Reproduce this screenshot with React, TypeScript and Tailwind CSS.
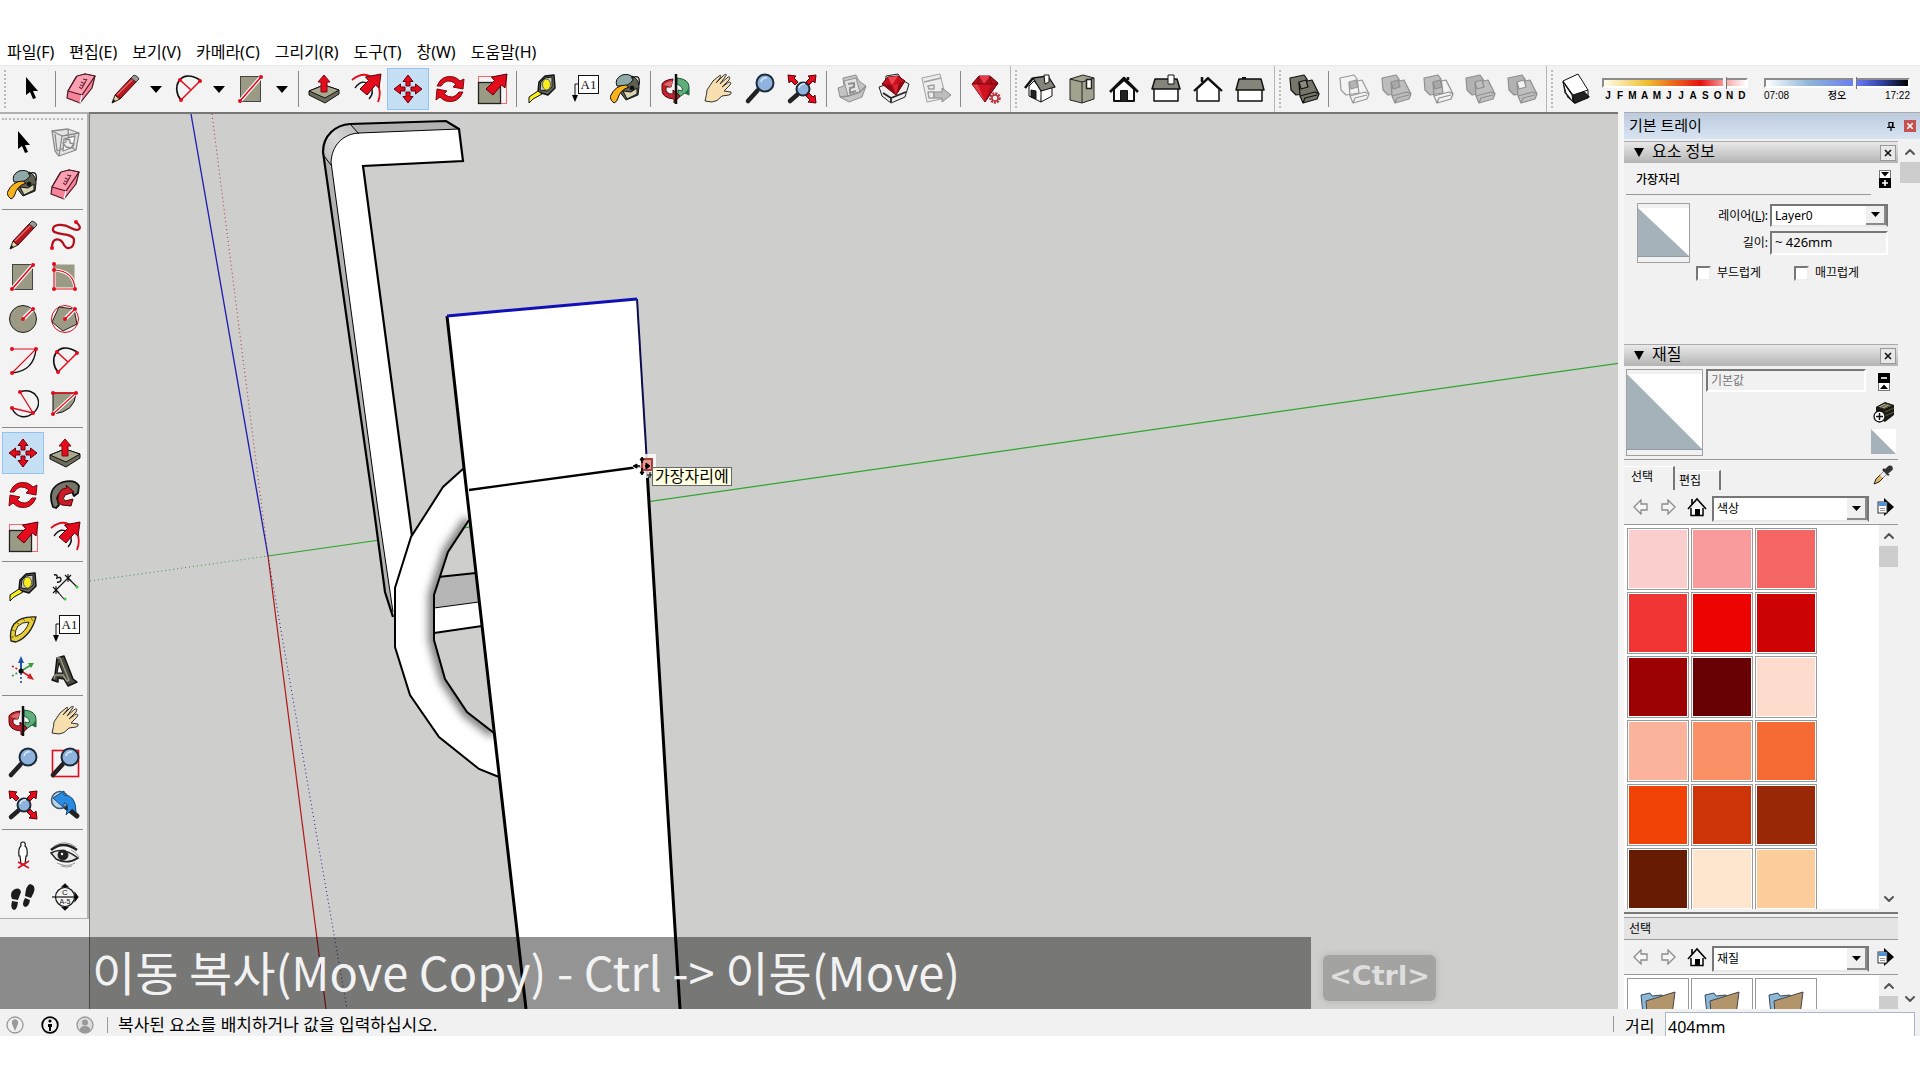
import React, { useState } from 'react';
import { ChevronDown, ChevronUp } from 'lucide-react';

const RED = '#e30b1c';
const TAN = '#9b9a84';

function Dots({ points }: { points: number[][] }) {
  return (
    <>
      {points.map(([x, y]) => (
        <circle key={`${x}-${y}`} cx={x} cy={y} r="2" fill={RED} />
      ))}
    </>
  );
}

function RedArrow() {
  return <path d="M31 1 L29 15 L25.500 12 L17 22 L10 16 L18.500 7.500 L15.500 4 Z" fill={RED} stroke="#5a0008" strokeWidth="1" />;
}

function Lens({ cx = 21, cy = 10, r = 8.5 }: { cx?: number; cy?: number; r?: number }) {
  return (
    <>
      <path d={`M${cx - r + 1} ${cy + r - 1} L4 28`} stroke="#222" strokeWidth="4.500" strokeLinecap="round" />
      <circle cx={cx} cy={cy} r={r} fill="#8fb3dc" stroke="#1d2a38" strokeWidth="2" />
      <path d={`M${cx - 4} ${cy - 1} A5 5 0 0 1 ${cx + 2} ${cy - 5}`} stroke="#d6e8fa" strokeWidth="1.500" fill="none" />
    </>
  );
}

function Boxes({ a, b, mid, line }: { a: string; b: string; mid: string; line: string }) {
  return (
    <g stroke={line} strokeWidth="1.200" strokeLinejoin="round">
      <path d="M2 5 L16 2 L19 6 L21 20 L8 22 L3 17 Z" fill={a} />
      <path d="M11 10 L24 7 L31 21 L29 26 L15 30 L12 23 Z" fill={b} />
      <path d="M12 23 L27 19 L31 21 M15 30 L17 25 L29 22" fill="none" />
      <path d="M11 9 L18 7 L20 14 L13 16 Z" fill={mid} />
    </g>
  );
}

const icons: Record<string, React.ReactNode> = {
  select: <path d="M11 4 V22 L15 19 L18 26 L21 25 L18 18 H23 Z" fill="#000" />,
  component: (
    <g fill="none" stroke="#8a8a8a" strokeWidth="1.300" strokeLinejoin="round">
      <path d="M3 4 L19 2 L30 6 L27 23 L10 29 L6 24 Z" fill="#e4e4e4" />
      <path d="M3 4 L13 9 L30 6 M13 9 L10 29 M6 7 L8 24 M8 24 L20 19 L27 23 M20 19 L19 2" />
      <path d="M15 12 L26 9 L24 20 L14 24 Z" fill="#fff" />
      <path d="M14 16 L17 15 V12 L21 13 V16 L25 17 L22 21 L17 20 Z" fill="#ececec" />
    </g>
  ),
  paint: (
    <g stroke="#111" strokeWidth="1" strokeLinejoin="round">
      <path d="M11 8 L22 3 Q29 6 29 14 L28 22 L16 27 L9 18 Z" fill="#5f5f52" />
      <path d="M13 18 L21 19 L27 15 L27 21 L17 26 Z" fill="#d9d4b4" />
      <path d="M7 13 Q4 6 12 2 Q20 0 23 5 Q23 10 15 13 Z" fill="#8fa9a8" />
      <path d="M21 5 Q31 0 29 12" fill="none" strokeWidth="1.300" />
      <circle cx="22" cy="15" r="2" fill="#111" />
      <path d="M0 24 Q5 12 16 12 L19 14 Q10 17 8 25 Q7 29 4 30 Q1 28 0 24 Z" fill="#fbb31c" />
    </g>
  ),
  eraser: (
    <g stroke="#4a1620" strokeWidth="1.200" strokeLinejoin="round">
      <path d="M3 18 L11 4 L20 1 L30 3 L27 15 L15 30 L2 25 Z" fill="#f7829a" />
      <path d="M3 18 L12 3 L20 1 L30 3 L17 22 Z" fill="#fb9fb2" />
      <path d="M17 22 L15 30" stroke="#fff" />
      <path d="M14 14 L17 16 M15 12 L19 13 M16 9 L20 11 M18 6 L22 7 M17 15 L22 6" stroke="#6b2736" />
    </g>
  ),
  pencil: (
    <g strokeLinejoin="round">
      <path d="M3 30 L6 22 L11 26 Z" fill="#e8cfa0" stroke="#222" />
      <path d="M3 30 L4.500 26 L6.500 28 Z" fill="#111" />
      <path d="M6 22 L23 4 L28 8 L11 26 Z" fill="#b9161f" stroke="#3a0508" />
      <path d="M8 22 L24 6" stroke="#ea6a6a" strokeWidth="1.200" />
      <path d="M22 5 L25 2 Q29 3 30 6 L27 9 Z" fill="#999" stroke="#333" />
    </g>
  ),
  freehand: (
    <g>
      <path d="M27 3 C35 10 29 13 22 9 C14 4 3 5 4 11 C5 17 25 13 25 21 C25 30 18 31 15 26 C12 19 3 17 3 29" fill="none" stroke="#b3101c" strokeWidth="2.200" />
      <Dots points={[[27, 3], [3, 29]]} />
    </g>
  ),
  rect: (
    <g>
      <rect x="5.500" y="3.500" width="20" height="25" fill={TAN} stroke="#444" />
      <path d="M26 4 L5 28" stroke="#fff" strokeWidth="4" />
      <path d="M26 4 L5 28" stroke={RED} strokeWidth="1.600" />
      <Dots points={[[26, 4], [5, 28]]} />
    </g>
  ),
  rotatedRect: (
    <g>
      <rect x="5.500" y="3.500" width="20" height="25" fill={TAN} />
      <path d="M5 9 Q25 10 26 28 H5 Z" fill={TAN} stroke="#fff" strokeWidth="3" />
      <path d="M5 3 V28 H26 Q25 10 5 9" fill="none" stroke={RED} strokeWidth="1.200" />
      <Dots points={[[5, 3], [5, 9], [5, 28], [26, 28]]} />
    </g>
  ),
  circle: (
    <g>
      <circle cx="16" cy="16" r="13.500" fill={TAN} stroke="#222" />
      <path d="M16 16 L26 6" stroke="#fff" strokeWidth="4" />
      <path d="M16 16 L26 6" stroke={RED} strokeWidth="1.500" />
      <Dots points={[[16, 16], [26, 6]]} />
    </g>
  ),
  polygon: (
    <g>
      <circle cx="16" cy="16" r="13.500" fill="none" stroke={RED} />
      <path d="M25 6 L28 21 L14 28 L3 19 L10 4 Z" fill={TAN} stroke="#222" />
      <path d="M16 16 L26 6" stroke="#fff" strokeWidth="4" />
      <path d="M16 16 L26 6" stroke={RED} strokeWidth="1.500" />
      <Dots points={[[16, 16], [26, 6]]} />
    </g>
  ),
  arc: (
    <g fill="none">
      <path d="M29 4 Q27 26 5 28" stroke="#111" strokeWidth="1.400" />
      <path d="M5 4 H29 L5 28" stroke={RED} strokeWidth="1.100" />
      <Dots points={[[5, 4], [29, 4], [5, 28]]} />
    </g>
  ),
  arc2: (
    <g fill="none">
      <path d="M9 27 C-1 16 7 -6 28 7" stroke="#111" strokeWidth="1.600" />
      <path d="M9 27 L28 8 M8 7 L19 17" stroke={RED} strokeWidth="1.500" />
      <Dots points={[[8, 7], [28, 8], [9, 27]]} />
    </g>
  ),
  arc3: (
    <g fill="none">
      <path d="M13 5 C29 -1 38 17 26 26 C19 32 9 31 5 21" stroke="#111" strokeWidth="1.400" />
      <path d="M13 5 L26 26 L5 21" stroke={RED} strokeWidth="1.300" />
      <Dots points={[[13, 5], [5, 21], [26, 26]]} />
    </g>
  ),
  pie: (
    <g fill="none">
      <path d="M4 6 H27 Q26 25 4 27 Z" fill={TAN} stroke="#111" />
      <path d="M4 27 L27 6" stroke="#fff" strokeWidth="3.500" />
      <path d="M4 27 L27 6 H4" stroke={RED} strokeWidth="1.300" />
      <Dots points={[[4, 6], [27, 6], [4, 27]]} />
    </g>
  ),
  move: (
    <g fill={RED} stroke="#6b0008" strokeWidth="1">
      {[0, 90, 180, 270].map((angle) => (
        <path key={angle} d="M16 2 L21 8.500 H18 V13 H14 V8.500 H11 Z" transform={`rotate(${angle} 16 16)`} />
      ))}
    </g>
  ),
  pushPull: (
    <g stroke="#111" strokeLinejoin="round">
      <path d="M1 18 L16 12 L31 17 V21 L17 30 L1 22 Z" fill="#6d6c5a" />
      <path d="M1 18 L16 12 L31 17 L17 25 Z" fill="#a9a891" />
      <path d="M16 2 L22 9 H19 V19 H13 V9 H10 Z" fill={RED} stroke="#7a0a10" />
    </g>
  ),
  rotate: (
    <g fill={RED} stroke="#7a0a10" strokeWidth="1">
      <path d="M3 13 Q8 1 20 4 Q23 5 26 8 L30 6 L29 16 L19 14 L22 11 Q13 4 7 13 Z" />
      <path d="M29 19 Q24 31 12 28 Q9 27 6 24 L2 27 L3 16 L13 18 L10 21 Q19 28 25 19 Z" />
    </g>
  ),
  followMe: (
    <g strokeLinejoin="round">
      <path d="M4 28 Q-3 9 14 3 Q26 0 30 7 L29 14 L25 17 L22 11 Q12 9 8 19 L10 26 L7 29 Z" fill="#77766a" stroke="#111" strokeWidth="1.800" />
      <path d="M9 19 Q10 9 18 9 L17 6 L25 13 L16 16 Q13 20 16 22 L24 20 L22 27 L13 26 Q8 24 9 19 Z" fill="#c91c27" stroke="#4a0508" />
    </g>
  ),
  scale: (
    <g>
      <rect x="2.500" y="3.500" width="28" height="27" fill="none" stroke="#f06a72" />
      <rect x="2.500" y="9.500" width="22" height="21" fill={TAN} stroke="#222" strokeWidth="1.300" />
      <RedArrow />
    </g>
  ),
  offset: (
    <g fill="none">
      <path d="M2 7 Q14 -3 24 6 Q33 16 28 29" stroke={RED} strokeWidth="1.800" />
      <path d="M5 15 Q12 5 20 12 Q25 20 19 26" stroke="#111" strokeWidth="1.400" />
      <RedArrow />
    </g>
  ),
  tape: (
    <g stroke="#111" strokeLinejoin="round">
      <path d="M13 9 L19 3 L28 2 L29 15 L22 22 L12 19 Z" fill="#66655c" strokeWidth="1.500" />
      <path d="M15 9 L19 5 L26 4 L26 14 L21 18 L14 17 Z" fill="#c9c9bd" />
      <ellipse cx="20.500" cy="11.500" rx="4" ry="5.500" fill="#f8ef1c" stroke="#555" />
      <path d="M12 18 L16 21 L7 26 L3 30 V24 Z" fill="#f8ef1c" />
    </g>
  ),
  dimension: (
    <g fill="none" stroke="#111" strokeWidth="1.100">
      <path d="M7 19 L19 7 M4 16 L10 22 M10 16 L4 22 M7 15 V23 M16 4 L22 10 M22 4 L16 10 M19 3 V11" />
      <path d="M7 19 L15 28 M19 7 L28 16" />
      <path d="M5 4 Q9 3 8 7 Q12 5 12 9 Q11 12 8 11" strokeWidth="1.400" />
      <circle cx="16" cy="28" r="1.500" fill="#3c3" stroke="none" />
      <circle cx="28" cy="16" r="1.500" fill="#3c3" stroke="none" />
    </g>
  ),
  protractor: (
    <g stroke="#222" strokeLinejoin="round">
      <path d="M29 4 Q14 3 7 11 Q2 18 4 28 L9 29 Q24 23 29 4 Z" fill="#e9cf35" strokeWidth="1.300" />
      <path d="M22 9 Q15 9 11 13 Q8 17 8 23 L10 23 Q19 19 22 9 Z" fill="#f4f3e8" />
      <path d="M24 5 L26 8 M16 6 L18 8 M10 10 L12 11 M5 17 L8 18 M4 24 L7 24" stroke="#776510" />
    </g>
  ),
  text: (
    <g>
      <rect x="10.500" y="2.500" width="20" height="18" fill="#fff" stroke="#111" />
      <text x="20.500" y="16" textAnchor="middle" fontSize="13" fontFamily="Liberation Serif, serif" fill="#111">A1</text>
      <path d="M10 11 H7 V25" fill="none" stroke="#111" />
      <path d="M4 22 H10 L7 29 Z" fill="#000" />
    </g>
  ),
  axes: (
    <g fill="none" strokeWidth="1.600">
      <path d="M14 16 V6" stroke="#1d55a8" strokeWidth="2" />
      <path d="M11 8 L14 1 L17 8 Z" fill="#1d55a8" />
      <path d="M14 16 L24 10" stroke="#3c9c3c" />
      <path d="M21 8 L27 8 L24 13 Z" fill="#3c9c3c" />
      <path d="M14 16 L22 21" stroke="#d21c24" />
      <path d="M20 23 L27 25 L23 18 Z" fill="#d21c24" />
      <path d="M14 18 V28" stroke="#1d55a8" strokeDasharray="2 2" />
      <path d="M5 21 L12 17" stroke="#3c9c3c" strokeDasharray="2 2" />
      <path d="M5 11 L12 15" stroke="#d21c24" strokeDasharray="2 2" />
      <circle cx="14" cy="16" r="2.500" fill="#111" />
    </g>
  ),
  text3d: (
    <g strokeLinejoin="round" stroke="#111">
      <path d="M8 3 L15 1 L24 24 L28 27 L19 31 L15 24 L9 23 L9 27 L3 25 L6 20 Z" fill="#4b4a42" strokeWidth="1.500" />
      <path d="M10 8 L14 18 L8 18 Z" fill="#f3f3f3" />
      <path d="M8 3 L11 3 L20 25 L18 26 L14 20 L6 20 L5 24" fill="none" stroke="#9b9a84" strokeWidth="1.400" />
    </g>
  ),
  orbit: (
    <g strokeLinejoin="round">
      <path d="M17 5 Q29 6 29 14 V22 L25 20 L18 25 V17 L22 18 Q24 14 17 11 Z" fill="#5fae7c" stroke="#1c5a34" />
      <path d="M25 20 L29 15 V22 Z" fill="#22703f" />
      <path d="M13 6 L11 14 L6 14 V18 Q9 22 13 21 V17 L20 23 L14 30 V26 Q2 25 2 17 V11 Q4 7 13 6 Z" fill="#c4222f" stroke="#55060d" />
      <path d="M4 12 Q7 8 13 8 L11 14 Z" fill="#d8686a" />
      <path d="M16 1 V31" stroke="#111" strokeWidth="2.500" />
    </g>
  ),
  pan: (
    <path
      d="M3 28 Q5 20 5 17 L11 8 L17 3 Q20 1 18 5 L14 10 L22 2 Q26 0 23 4 L18 11 L26 4 Q29 3 27 7 L20 14 L27 9 Q30 9 28 12 L22 18 L29 19 Q30 21 27 22 L20 23 Q15 29 10 29 Z"
      fill="#f7dfb0"
      stroke="#333"
      strokeLinejoin="round"
    />
  ),
  zoom: <Lens />,
  zoomWindow: (
    <g>
      <rect x="3.500" y="3.500" width="26" height="26" fill="none" stroke={RED} strokeWidth="1.600" />
      <Lens />
    </g>
  ),
  zoomExtents: (
    <g>
      <Lens cx={17} cy={16} r={6.5} />
      <g fill={RED} stroke="#5a0008" strokeWidth="1">
        <path d="M2 2 L10 3 L8 5 L12 9 L9 12 L5 8 L3 10 Z" />
        <path d="M30 2 L22 3 L24 5 L20 9 L23 12 L27 8 L29 10 Z" />
        <path d="M30 30 L22 29 L24 27 L20 23 L23 20 L27 24 L29 22 Z" />
      </g>
    </g>
  ),
  previous: (
    <g>
      <path d="M17 18 L28 27" stroke="#222" strokeWidth="5" strokeLinecap="round" />
      <circle cx="11" cy="11" r="8.500" fill="#b9d2ea" stroke="#456" strokeWidth="1.500" />
      <path d="M4 9 L15 2 V6 Q27 6 27 23 L23 20 L17 26 Q21 14 15 14 V19 Z" fill="#2b8be0" stroke="#134a80" />
    </g>
  ),
  camera: (
    <g fill="none" stroke="#111" strokeWidth="1.200">
      <path d="M16 3 Q19 3 18 7 Q21 9 20 17 L19 17 L18 25 H14 L13 17 L12 17 Q11 9 14 7 Q13 3 16 3 Z" fill="#fff" />
      <path d="M11 29 L22 22 M11 23 L22 29" stroke={RED} strokeWidth="1.500" />
    </g>
  ),
  eye: (
    <g fill="none" stroke="#222">
      <path d="M2 14 Q14 7 29 19 Q18 26 7 20 Z" fill="#e8e8e8" strokeWidth="1.500" />
      <circle cx="14" cy="16" r="5" fill="#222" />
      <circle cx="13" cy="15" r="1.200" fill="#fff" stroke="none" />
      <path d="M2 11 Q14 1 28 11" strokeWidth="2.500" />
      <path d="M5 7 Q16 0 27 8 M8 24 Q18 29 26 24 M12 27 Q18 29 23 27 M22 11 Q27 13 30 18" stroke="#999" />
    </g>
  ),
  walk: (
    <g fill="#1c1c1c">
      <path d="M8 8 Q13 6 14 11 L11 19 L5 18 Q2 11 8 8 Z M5 20 L11 21 Q10 29 7 29 Q3 28 5 20 Z" />
      <path d="M23 3 Q29 4 27 11 L24 17 L18 15 Q19 4 23 3 Z M18 17 L23 19 Q22 26 18 26 Q14 24 18 17 Z" />
    </g>
  ),
  section: (
    <g fill="none" stroke="#111" strokeWidth="1.200">
      <circle cx="16" cy="16" r="9.500" />
      <path d="M3 16 H29" />
      <path d="M13 6 L16 3 L19 6 Z M26 12 L29 16 L26 20 Z M13 26 L16 29 L19 26 Z" fill="#000" />
      <text x="16" y="14" textAnchor="middle" fontSize="8" fontFamily="Liberation Sans, sans-serif" fill="#111" stroke="none">C</text>
      <text x="16" y="23" textAnchor="middle" fontSize="7" fontFamily="Liberation Sans, sans-serif" fill="#111" stroke="none">A-5</text>
    </g>
  ),
  getModels: (
    <g fill="#c4c4c4" stroke="#8f8f8f" strokeLinejoin="round">
      <path d="M2 15 L8 13 L7 5 L20 2 L23 8 L30 13 L26 24 L13 29 L4 24 Z" />
      <path d="M8 8 L20 5 L24 19 L12 23 Z" fill="#e2e2e2" />
      <path d="M12 11 L18 10 V14 L14 15 V20 L20 18" fill="none" strokeWidth="2" />
      <path d="M4 24 L12 23 L24 19 L30 13" fill="none" strokeWidth="1.500" />
    </g>
  ),
  shareModel: (
    <g stroke="#222" strokeLinejoin="round">
      <path d="M1 14 L7 12 L8 3 L20 1 L24 7 L31 11 L27 24 L13 30 L4 23 Z" fill="#eee" />
      <path d="M4 11 L10 4 L20 3 L27 8 L18 22 Z" fill="#c90f1e" stroke="#500" />
      <path d="M4 11 L14 12 L27 8 L18 22 Z" fill="#8e0814" stroke="none" />
      <path d="M10 4 L14 12 L20 3 Z" fill="#ee4450" stroke="none" />
      <path d="M14 12 L18 22 L21 10 Z" fill="#d8202e" stroke="none" />
      <path d="M5 20 L13 25 L28 19 M13 25 V29" fill="none" strokeWidth="1.800" />
    </g>
  ),
  shareComponent: (
    <g fill="#ededed" stroke="#a0a0a0" strokeLinejoin="round">
      <path d="M2 5 L20 1 L26 25 L7 29 Z" />
      <path d="M4 9 L21 5 M8 13 L14 12 V16 H9 Z M8 19 H14 V25 H9 Z" fill="none" strokeWidth="1.500" />
      <path d="M14 19 H22 V15 L31 22 L22 29 V25 H14 Z" fill="#bdbdbd" stroke="#8c8c8c" />
    </g>
  ),
  ruby: (
    <g strokeLinejoin="round">
      <path d="M2 11 L9 3 H20 L28 10 L15 29 Z" fill="#b00d1b" stroke="#5a0008" />
      <path d="M9 3 L14 11 L20 3 Z M2 11 H8 L15 29 Z" fill="#e63a48" />
      <path d="M8 11 H21 L15 29 Z" fill="#d01424" />
      <path d="M2 11 H28 M9 3 L8 11 M20 3 L21 11" fill="none" stroke="#6d0610" strokeWidth=".8" />
      <circle cx="25" cy="25" r="4.500" fill="#f3f3f3" stroke="#b8323c" strokeWidth="2.500" strokeDasharray="2 1" />
      <circle cx="25" cy="25" r="3" fill="none" stroke="#b8323c" strokeWidth="1.500" />
    </g>
  ),
  iso: (
    <g stroke="#111" strokeLinejoin="round">
      <path d="M5 13 L10 8 L18 17 L17 29 L5 23 Z" fill="#fff" />
      <path d="M17 17 L28 12 V23 L17 29 Z" fill="#fff" />
      <path d="M9 5 L24 3 L31 14 L17 18 Z" fill="#85847a" strokeWidth="1.300" />
      <path d="M9 5 L1 15" strokeWidth="2.500" />
      <path d="M20 2 H25 V9 L21 11 Z" fill="#fff" />
      <path d="M7 17 L12 18 V26 L7 24 Z" fill="#222" />
    </g>
  ),
  top: (
    <g stroke="#222" strokeLinejoin="round">
      <path d="M4 6 L17 2 L28 5 V26 L16 30 L4 27 Z" fill="#a3a28f" />
      <path d="M4 6 L16 9 L28 5 M16 9 V30" fill="none" />
      <rect x="20.500" y="6.500" width="5" height="9" fill="#fff" strokeWidth="1.500" />
    </g>
  ),
  front: (
    <g stroke="#111" strokeLinejoin="round">
      <path d="M6 16 L16 7 L26 16 V28 H6 Z" fill="#fff" strokeWidth="2" />
      <path d="M2 19 L16 5 L30 19" fill="none" strokeWidth="2.500" />
      <rect x="12.500" y="17.500" width="7" height="11" fill="#222" />
      <path d="M20 7 V4" strokeWidth="2.500" />
    </g>
  ),
  right: (
    <g stroke="#111" strokeLinejoin="round">
      <rect x="4" y="15" width="24" height="13" fill="#fff" strokeWidth="1.500" />
      <path d="M2 16 L5 6 H27 L30 16 Z" fill="#85847a" strokeWidth="1.500" />
      <rect x="18" y="2" width="6" height="9" fill="#fff" />
    </g>
  ),
  back: (
    <g stroke="#111" strokeLinejoin="round">
      <path d="M5 16 L16 6 L27 16 V28 H5 Z" fill="#fff" strokeWidth="1.500" />
      <path d="M2 18 L16 5 L30 18" fill="none" strokeWidth="2.200" />
      <path d="M10 9 V4" strokeWidth="2.500" />
    </g>
  ),
  left: (
    <g stroke="#111" strokeLinejoin="round">
      <rect x="4" y="16" width="24" height="12" fill="#fff" strokeWidth="1.500" />
      <path d="M2 17 L5 6 H27 L30 17 Z" fill="#85847a" strokeWidth="1.500" />
      <path d="M8 5 H12" strokeWidth="2" />
    </g>
  ),
  outerShell: <Boxes a="#77766a" b="#77766a" mid="#8b8a7c" line="#111" />,
  intersect: <Boxes a="none" b="none" mid="#b4b4b4" line="#999" />,
  union: <Boxes a="#bdbdbd" b="#bdbdbd" mid="#a8a8a8" line="#8f8f8f" />,
  subtract: <Boxes a="#bdbdbd" b="none" mid="#a8a8a8" line="#8f8f8f" />,
  trim: <Boxes a="#b2b2b2" b="#bfbfbf" mid="#bfbfbf" line="#8f8f8f" />,
  split: <Boxes a="#b2b2b2" b="#bfbfbf" mid="#f3f3f3" line="#8f8f8f" />,
  shadow: (
    <g strokeLinejoin="round">
      <path d="M4 9 L7 24 L15 31 L30 24 L24 18 Z" fill="#222" />
      <path d="M3 8 L18 1 L28 17 L13 22 Z" fill="#fff" stroke="#111" />
      <path d="M13 22 L14 30 L28 25 V17 M3 8 L5 20 L14 30" fill="none" stroke="#111" />
      <path d="M3 9 L12 22 L13 29 L6 20 Z" fill="#fff" stroke="#111" />
    </g>
  ),
};

function Tool({ name, label, active }: { name: string; label: string; active?: boolean }) {
  return (
    <button
      type="button"
      aria-label={label}
      title={label}
      className={
        active
          ? 'w-[42px] h-[42px] flex items-center justify-center bg-[#c5dff5] border border-[#94c4ec]'
          : 'w-[42px] h-[42px] flex items-center justify-center border border-transparent hover:bg-[#dcecf9]'
      }
    >
      <svg viewBox="0 0 32 32" className="w-8 h-8 shrink-0">{icons[name]}</svg>
    </button>
  );
}

function DropTool({ name, label }: { name: string; label: string }) {
  return (
    <div className="flex items-center">
      <Tool name={name} label={label} />
      <button type="button" aria-label={`${label} 더 보기`} className="w-[21px] h-[42px] flex items-center pl-1">
        <svg viewBox="0 0 12 8" className="w-3 h-2"><path d="M0 1 H12 L6 8 Z" /></svg>
      </button>
    </div>
  );
}

function Separator() {
  return <div className="w-2 pl-[3px] h-9"><div className="w-px h-full bg-[#8a8a8a]" /></div>;
}

function Grip({ first }: { first?: boolean }) {
  return (
    <div className={first ? 'h-full w-[10px] pl-1 py-1' : 'h-full w-3 pl-[3px] flex gap-[4px]'}>
      {!first && <div className="w-px h-full bg-[#b5b5b5]" />}
      <div className={first ? 'w-0.5 h-full border-l-2 border-dotted border-[#bbb]' : 'w-0.5 my-1 border-l-2 border-dotted border-[#bbb]'} />
    </div>
  );
}

const menus = ['파일(F)', '편집(E)', '보기(V)', '카메라(C)', '그리기(R)', '도구(T)', '창(W)', '도움말(H)'];
const months = ['J', 'F', 'M', 'A', 'M', 'J', 'J', 'A', 'S', 'O', 'N', 'D'];

// name / label pairs, two per row
const palette: string[][][] = [
  [['select', '선택'], ['component', '구성 요소 만들기'], ['paint', '페인트 통'], ['eraser', '지우개']],
  [
    ['pencil', '선'], ['freehand', '자유 곡선'],
    ['rect', '직사각형'], ['rotatedRect', '회전된 직사각형'],
    ['circle', '원'], ['polygon', '다각형'],
    ['arc', '호'], ['arc2', '2점 호'],
    ['arc3', '3점 호'], ['pie', '파이'],
  ],
  [['move', '이동'], ['pushPull', '밀기/끌기'], ['rotate', '회전'], ['followMe', '따라가기'], ['scale', '배율'], ['offset', '오프셋']],
  [['tape', '줄자'], ['dimension', '치수'], ['protractor', '각도기'], ['text', '텍스트'], ['axes', '축'], ['text3d', '3D 텍스트']],
  [['orbit', '궤도'], ['pan', '이동 보기'], ['zoom', '확대/축소'], ['zoomWindow', '창 확대'], ['zoomExtents', '범위 확대'], ['previous', '이전']],
  [['camera', '카메라 배치'], ['eye', '둘러보기'], ['walk', '걷기'], ['section', '단면']],
];

const swatches = [
  '#fbcece', '#f99b9c', '#f46564',
  '#f03535', '#ee0303', '#cd0204',
  '#9c0204', '#670103', '#fddccd',
  '#fab49b', '#f99066', '#f66a34',
  '#f14306', '#cd3508', '#992806',
  '#671b03', '#fee5cd', '#fbcd9a',
];

const sliderBase =
  'appearance-none block w-full h-[10px] border-t-2 border-l-2 border-t-[#8b8b8b] border-l-[#8b8b8b] border-b-2 border-r-2 border-b-white border-r-white [&::-webkit-slider-thumb]:appearance-none [&::-webkit-slider-thumb]:w-1 [&::-webkit-slider-thumb]:h-3 [&::-webkit-slider-thumb]:bg-[#f3f3f3] [&::-webkit-slider-thumb]:border-r [&::-webkit-slider-thumb]:border-[#777]';

function TopToolbar() {
  return (
    <div role="toolbar" className="h-[47px] shrink-0 bg-[#f3f3f3] border-t border-[#e9e9e9] flex items-center overflow-hidden">
      <Grip first />
      <Tool name="select" label="선택" />
      <Separator />
      <div className="flex gap-0.5 pr-0.5">
        <Tool name="eraser" label="지우개" />
        <div className="flex">
          <DropTool name="pencil" label="선" />
          <DropTool name="arc2" label="호" />
          <DropTool name="rect" label="도형" />
        </div>
      </div>
      <Separator />
      <Tool name="pushPull" label="밀기/끌기" />
      <Tool name="offset" label="오프셋" />
      <Tool name="move" label="이동" active />
      <Tool name="rotate" label="회전" />
      <Tool name="scale" label="배율" />
      <Separator />
      <Tool name="tape" label="줄자" />
      <Tool name="text" label="텍스트" />
      <Tool name="paint" label="페인트 통" />
      <Separator />
      <Tool name="orbit" label="궤도" />
      <Tool name="pan" label="이동 보기" />
      <Tool name="zoom" label="확대/축소" />
      <Tool name="zoomExtents" label="범위 확대" />
      <Separator />
      <Tool name="getModels" label="모델 가져오기" />
      <Tool name="shareModel" label="모델 공유" />
      <Tool name="shareComponent" label="구성 요소 공유" />
      <Separator />
      <Tool name="ruby" label="확장 프로그램" />
      <Grip />
      <Tool name="iso" label="등각" />
      <Tool name="top" label="상단" />
      <Tool name="front" label="전면" />
      <Tool name="right" label="오른쪽" />
      <Tool name="back" label="후면" />
      <Tool name="left" label="왼쪽" />
      <Grip />
      <Tool name="outerShell" label="외부 셸" />
      <Separator />
      <Tool name="intersect" label="교차" />
      <Tool name="union" label="결합" />
      <Tool name="subtract" label="빼기" />
      <Tool name="trim" label="자르기" />
      <Tool name="split" label="분할" />
      <Grip />
      <Tool name="shadow" label="그림자" />
      <div className="flex gap-4 pl-[5px] pt-0.5 font-['Liberation_Sans','Noto_Sans_CJK_KR',sans-serif] text-[10px] leading-3 text-black">
        <label className="w-[146px] flex flex-col gap-0.5">
          <input
            type="range"
            aria-label="날짜"
            defaultValue={86}
            className={`${sliderBase} [background-image:linear-gradient(90deg,#fffdf0,#f0c030_30%,#e81010_68%,#f5a0a0_85%,#fff)]`}
          />
          <span className="flex justify-between px-0.5 font-bold">
            {months.map((m, i) => <span key={i} className="w-2 text-center">{m}</span>)}
          </span>
        </label>
        <label className="w-[146px] flex flex-col gap-0.5">
          <input
            type="range"
            aria-label="시간"
            defaultValue={63}
            className={`${sliderBase} [background-image:linear-gradient(90deg,#fff,#8fb6d8_30%,#6678f0_65%,#3040a0_82%,#000)]`}
          />
          <span className="flex justify-between font-medium"><span>07:08</span><span>정오</span><span>17:22</span></span>
        </label>
      </div>
    </div>
  );
}

function Palette() {
  return (
    <div className="w-[89px] shrink-0 bg-[#f0f0f0]">
      <div className="bg-[#f3f3f3] border-t-2 border-[#b0b0b0] border-r-2 border-b pt-1 pl-0.5">
        <div className="h-1 mr-1 border-t-2 border-dotted border-[#bbb]" />
        {palette.map((group, i) => (
          <div key={i} className={i === 0 ? '' : 'mt-[3px] pt-1 border-t border-[#8a8a8a] mr-1'}>
            <div className="grid grid-cols-[42px_42px]">
              {group.map(([name, label]) => (
                <Tool key={name} name={name} label={label} active={name === 'move'} />
              ))}
            </div>
          </div>
        ))}
      </div>
    </div>
  );
}

const ringOuter = '464,468 443,487 411,537 395,588 395,647 410,695 439,737 479,769 499,777';
const ringInner = '494,733 467,712 445,679 434,640 434,595 448,552 469,520';

function Scene() {
  return (
    <svg viewBox="90 114 1528 895" preserveAspectRatio="xMinYMin slice" className="block w-full h-full" fill="none">
      <defs>
        <filter id="soft" x="-60%" y="-20%" width="220%" height="140%"><feGaussianBlur stdDeviation="4" /></filter>
        <clipPath id="ring"><polygon points={`${ringOuter} ${ringInner}`} /></clipPath>
        <linearGradient id="bend" x1="0" y1="1" x2="1" y2="0">
          <stop offset="0" stopColor="#bbb" />
          <stop offset=".5" stopColor="#d8d8d8" />
          <stop offset="1" stopColor="#b5b5b5" />
        </linearGradient>
      </defs>

      {/* axes */}
      <path d="M191 114 L268 556" stroke="#1d1db0" strokeWidth="1.300" />
      <path d="M212 114 L268 556" stroke="#b03030" strokeDasharray="1 3" />
      <path d="M90 581 L268 556" stroke="#2f9a2f" strokeDasharray="1 3" />
      <path d="M268 556 L326 1009" stroke="#b01818" strokeWidth="1.200" />
      <path d="M268 556 L347 1009" stroke="#1d1d90" strokeDasharray="1 3" />
      <path d="M268 556 L1620 363" stroke="#2fa52f" strokeWidth="1.200" />
      <path d="M420 535 L480 526 L480 700 L420 700 Z" fill="#cececc" />
      <path d="M463 528 L470 527" stroke="#2fa52f" />

      {/* bent bracket */}
      <path d="M323 152 C323 135 336 125 350 124 L446 121 L459 129 L400 624 L393 617 L385 592 L374 510 Z" fill="#b2b2b2" />
      <path d="M323 152 C323 135 336 125 350 124 L359 134 C342 134 331 148 331 164 Z" fill="url(#bend)" />
      <path d="M331 162 C332 146 342 134 359 133 L459 129 L463 161 L363 166 L412 535 L400 624 L393 612 L378 510 Z" fill="#fff" />
      <path d="M364 167 L463 162 L470 420 L412 535 Z" fill="#cececc" />
      <path d="M393 612 L378 510 L331 162 C332 146 342 134 359 133 L459 129 M351 125 L359 134 M324 156 L331 165" stroke="#000" />
      <path d="M393 617 L385 592 L374 510 L323 152 C323 135 336 125 350 124 L446 121 L459 129 L463 161 L363 166 L412 536" stroke="#000" strokeWidth="2.200" />
      <path d="M434 578 L475 573 L479 602 L434 608 Z" fill="#b5b5b5" />
      <path d="M434 608 L479 602 L482 626 L434 633 Z" fill="#fff" />
      <path d="M434 608 L479 602" stroke="#000" />
      <path d="M438 577 L476 573 M434 633 L482 626" stroke="#000" strokeWidth="2" />

      {/* handle ring */}
      <polygon points={`${ringOuter} ${ringInner}`} fill="#fff" />
      <g clipPath="url(#ring)">
        <polyline points={ringInner} stroke="#777" strokeWidth="11" filter="url(#soft)" />
      </g>
      <polyline points={ringOuter} stroke="#000" strokeWidth="2" />
      <polyline points={ringInner} stroke="#000" strokeWidth="2" />

      {/* slab */}
      <path d="M447 316 L637 299 L648 480 L667 800 L680 1009 L526 1009 L502 800 L464 468 Z" fill="#fff" />
      <path d="M447 316 L464 468 L502 800 L526 1009 M647 470 L667 800 L680 1009" stroke="#000" strokeWidth="3" />
      <path d="M469 490 L646 466" stroke="#000" strokeWidth="2.300" />
      <path d="M637 299 L647 464" stroke="#0c0c50" strokeWidth="2" />
      <path d="M447 316 L637 299" stroke="#1010b8" strokeWidth="3" />

      {/* move cursor */}
      <path d="M632 466 L640 458 V454 H656 V472 H650 L648 478 H640 Z" fill="#fff" opacity=".8" />
      <rect x="642" y="459" width="10" height="11" fill="#e39a90" stroke="#a8403a" strokeWidth="2" />
      <path d="M636 466 H650 M642 459 V474" stroke="#000" strokeDasharray="4 5" strokeWidth="1.500" />
      <path d="M633 466 L637 464 V468 Z M650 466 L646 463 V469 Z M642 457 L640 460 H644 Z M642 475 L640 472 H644 Z M647 475 H653 M650 472 V478" fill="#000" stroke="#000" />
    </svg>
  );
}

function SectionHeader({ title }: { title: string }) {
  return (
    <div className="h-[22px] shrink-0 flex items-center justify-between pl-[10px] pr-0.5 border-t border-[#aaa] bg-linear-to-b from-[#e9e9e9] to-[#b4b4b4]">
      <h2 className="flex items-center gap-2 text-[16px] leading-4 pb-1 text-black">
        <svg viewBox="0 0 10 9" className="w-[10px] h-[9px] mt-1"><path d="M0 0 H10 L5 9 Z" /></svg>
        {title}
      </h2>
      <button type="button" aria-label={`${title} 닫기`} className="w-4 h-4 bg-[#e8e8e8] border border-[#999] flex items-center justify-center">
        <svg viewBox="0 0 8 8" className="w-2 h-2"><path d="M1 1 L7 7 M7 1 L1 7" stroke="#111" strokeWidth="1.600" /></svg>
      </button>
    </div>
  );
}

function Thumb({ className }: { className: string }) {
  return (
    <div className={`${className} shrink-0 border border-[#a0a0a0] bg-[#f1f1f1] pt-1 pb-[5px]`}>
      <svg viewBox="0 0 10 10" preserveAspectRatio="none" className="block w-full h-full bg-white border-b border-[#8f9aa2]">
        <path d="M0 0 L10 10 H0 Z" fill="#a6b2ba" />
      </svg>
    </div>
  );
}

function Drop({ id, label, value, className }: { id: string; label?: string; value: string; className: string }) {
  return (
    <div className={`${className} relative`}>
      <select
        id={id}
        aria-label={label}
        defaultValue={value}
        className="appearance-none block w-full h-full bg-white border-2 border-t-[#777] border-l-[#777] border-b-[#e8e8e8] border-r-[#777] pl-[3px] text-[12px] leading-4 text-black"
      >
        <option>{value}</option>
      </select>
      <span className="pointer-events-none absolute right-0.5 top-0.5 bottom-0.5 w-5 bg-[#f0f0f0] border-r-2 border-b-2 border-[#8a8a8a] flex items-center justify-center">
        <svg viewBox="0 0 9 5" className="w-[9px] h-[5px]"><path d="M0 0 H9 L4.500 5 Z" /></svg>
      </span>
    </div>
  );
}

function NavRow({ id, value }: { id: string; value: string }) {
  return (
    <div className="h-[35px] shrink-0 flex items-center pl-[9px] border-b border-[#999]">
      <div className="flex gap-[11px]">
        <button type="button" aria-label="뒤로">
          <svg viewBox="0 0 16 16" className="w-4 h-4"><path d="M1 8 L8 1 V5 H14 V11 H8 V15 Z" fill="#f6f6f6" stroke="#8a8a8a" strokeWidth="1.300" /></svg>
        </button>
        <button type="button" aria-label="앞으로">
          <svg viewBox="0 0 16 16" className="w-4 h-4"><path d="M15 8 L8 1 V5 H2 V11 H8 V15 Z" fill="#f6f6f6" stroke="#8a8a8a" strokeWidth="1.300" /></svg>
        </button>
        <button type="button" aria-label="홈">
          <svg viewBox="0 0 20 20" className="w-5 h-5">
            <path d="M4 11 V18.500 H16 V11" fill="#fff" stroke="#000" strokeWidth="1.500" />
            <path d="M1 12 L10 2 L19 12 M5 8 V2" fill="none" stroke="#000" strokeWidth="1.600" />
            <path d="M8 12 H13 V19 H8 Z" />
          </svg>
        </button>
      </div>
      <Drop id={id} label="라이브러리" value={value} className="w-[157px] h-[26px] mt-1 ml-[5px] mr-2" />
      <button type="button" aria-label="세부 정보">
        <svg viewBox="0 0 17 18" className="w-[17px] h-[18px]">
          <path d="M7 0 L17 9 L7 18 Z" />
          <rect x="1" y="4" width="9" height="11" fill="#fff" stroke="#333" />
          <path d="M1.500 4.500 H9.500 V8 H1.500 Z" fill="#4d8fd8" />
          <path d="M3 10.500 H8 M3 12.500 H8" stroke="#999" />
        </svg>
      </button>
    </div>
  );
}

function ScrollEdge({ down }: { down?: boolean }) {
  return (
    <div className="h-[21px] shrink-0 flex items-center justify-center text-[#555]">
      {down ? <ChevronDown className="w-4 h-4" strokeWidth={3} /> : <ChevronUp className="w-4 h-4" strokeWidth={3} />}
    </div>
  );
}

function Tray() {
  const [soft, setSoft] = useState(false);
  const [smooth, setSmooth] = useState(false);

  return (
    <aside className="w-[302px] shrink-0 border-l-[6px] border-[#f6f6f6] bg-[#f1f1f1] flex flex-col min-h-0">
      <div className="h-[27px] shrink-0 mb-0.5 flex items-center justify-between pl-[5px] pr-1 border-t border-[#aaa] bg-linear-to-b from-[#bccbdd] to-[#d8e4f2]">
        <h1 className="text-[15px] leading-5 pb-0.5 text-black">기본 트레이</h1>
        <div className="flex items-center gap-[9px]">
          <button type="button" aria-label="고정">
            <svg viewBox="0 0 8 9" className="w-2 h-[9px]"><path d="M2 .5 H6 V5 H2 Z M0 5.500 H8 M4 5.500 V9 M5.500 .5 V5" fill="none" stroke="#000" strokeWidth="1.200" /></svg>
          </button>
          <button type="button" aria-label="트레이 닫기" className="w-3 h-3 bg-[#c75050] flex items-center justify-center">
            <svg viewBox="0 0 6 6" className="w-1.5 h-1.5"><path d="M0 0 L6 6 M6 0 L0 6" stroke="#fff" strokeWidth="1.500" /></svg>
          </button>
        </div>
      </div>

      <div className="flex flex-1 min-h-0 gap-0.5">
        <div className="w-[274px] flex flex-col min-h-0">
          <SectionHeader title="요소 정보" />
          <div className="h-[181px] shrink-0 text-[12px] leading-4 text-black">
            <div className="flex">
              <div className="w-[245px] h-8 ml-0.5 pl-[10px] pt-0.5 flex items-center border-b border-[#999] font-medium">가장자리</div>
              <button type="button" aria-label="세부 정보 표시" className="flex-1 flex items-center justify-center">
                <svg viewBox="0 0 12 18" className="w-3 h-[18px]">
                  <rect x=".5" y=".5" width="11" height="17" fill="#fff" stroke="#777" />
                  <path d="M2 2 H10 L6 6.500 Z M0 8 H12 V18 H0 Z" />
                  <path d="M3 13 H9 M6 10 V16" stroke="#fff" strokeWidth="1.600" />
                </svg>
              </button>
            </div>
            <div className="flex pt-2 pl-[13px] gap-[6px]">
              <Thumb className="w-[53px] h-[60px]" />
              <div className="w-[192px] pt-px">
                <div className="flex items-center justify-between">
                  <label htmlFor="layer" className="flex-1 text-right pr-0.5">레이어(<u>L</u>):</label>
                  <Drop id="layer" value="Layer0" className="w-[118px] h-[23px]" />
                </div>
                <div className="flex items-center justify-between mt-1">
                  <label htmlFor="length" className="flex-1 text-right pr-0.5">길이:</label>
                  <input
                    id="length"
                    readOnly
                    value="~ 426mm"
                    className="w-[118px] h-6 pl-[3px] pb-0.5 text-[13px] bg-[#f1f1f1] border-2 border-t-[#777] border-l-[#777] border-b-white border-r-white"
                  />
                </div>
                <div className="grid grid-cols-[98px_1fr] mt-[10px]">
                  <label className="flex items-center gap-1.5">
                    <input
                      type="checkbox"
                      checked={soft}
                      onChange={(e) => setSoft(e.target.checked)}
                      className="appearance-none w-[15px] h-[15px] bg-white checked:bg-black border-2 border-t-[#777] border-l-[#777] border-b-[#eee] border-r-[#eee]"
                    />
                    부드럽게
                  </label>
                  <label className="flex items-center gap-1.5">
                    <input
                      type="checkbox"
                      checked={smooth}
                      onChange={(e) => setSmooth(e.target.checked)}
                      className="appearance-none w-[15px] h-[15px] bg-white checked:bg-black border-2 border-t-[#777] border-l-[#777] border-b-[#eee] border-r-[#eee]"
                    />
                    매끄럽게
                  </label>
                </div>
              </div>
            </div>
          </div>

          <SectionHeader title="재질" />
          <div className="h-[94px] shrink-0 flex pt-[3px] pl-0.5 border-b border-[#999]">
            <Thumb className="w-[77px] h-[87px]" />
            <input
              aria-label="재질 이름"
              readOnly
              value="기본값"
              className="w-[160px] h-[23px] ml-[3px] mr-[5px] pl-[3px] pb-0.5 text-[12px] text-[#777] border-2 border-t-[#777] border-l-[#777] border-b-white border-r-white"
            />
            <div className="w-[25px] pt-1 flex flex-col items-center">
              <button type="button" aria-label="보조 창 표시">
                <svg viewBox="0 0 12 18" className="block w-3 h-[18px]">
                  <rect x=".5" y=".5" width="11" height="17" fill="#fff" stroke="#777" />
                  <path d="M0 0 H12 V10 H0 Z M2 16 H10 L6 11.500 Z" />
                  <path d="M3 5 H9" stroke="#fff" strokeWidth="1.600" />
                </svg>
              </button>
              <button type="button" aria-label="재질 만들기" className="mt-[10px] mb-1.5">
                <svg viewBox="0 0 22 22" className="block w-[22px] h-[22px]">
                  <path d="M3 6 L12 1 L21 4 V14 L12 21 L3 16 Z" fill="#1c1c14" />
                  <path d="M4 6 L12 2 L20 4.500 L12 8 Z" fill="#b8b490" stroke="#111" />
                  <path d="M7 7 L15 3 M10 8 L18 4 M12 11 L21 7 M12 15 L21 11" stroke="#55523c" strokeWidth="1.300" />
                  <circle cx="6.500" cy="15.500" r="5.500" fill="#fff" stroke="#111" strokeWidth="1.300" />
                  <path d="M3 15.500 H10 M6.500 12 V19" stroke="#111" strokeWidth="1.500" />
                </svg>
              </button>
              <svg viewBox="0 0 10 10" className="block w-[25px] h-[25px] bg-white shrink-0"><path d="M0 0 L10 10 H0 Z" fill="#a6b2ba" /></svg>
            </div>
          </div>

          <div className="h-[30px] shrink-0 flex items-end justify-between pr-[5px] text-[12px] leading-4 text-black">
            <div role="tablist" className="flex items-end">
              <button type="button" role="tab" aria-selected="true" className="w-[51px] h-6 pl-[7px] pb-1 text-left border-t border-t-white border-r-2 border-r-[#777]">선택</button>
              <button type="button" role="tab" aria-selected="false" className="w-[46px] h-5 pl-1 text-left border-t border-t-white border-r-2 border-r-[#777]">편집</button>
            </div>
            <button type="button" aria-label="스포이트" className="self-center">
              <svg viewBox="0 0 20 20" className="w-5 h-5">
                <path d="M1 19 L3 14 L11 6 L14 9 L6 17 Z" fill="#e2b45c" stroke="#222" />
                <path d="M7 10 L11 6 L14 9 L10 13 Z" fill="#eee" />
                <path d="M10 4 L16 10 M12 6 L16 2 Q19 1 18.500 4 L14 8 Z" stroke="#333" strokeWidth="2.500" fill="#333" />
              </svg>
            </button>
          </div>
          <NavRow id="library" value="색상" />

          <div className="flex-1 min-h-0 flex bg-white overflow-hidden">
            <div className="flex-1 grid grid-cols-[62px_62px_62px] auto-rows-[62px] gap-0.5 pt-[3px] pl-[3px] overflow-hidden">
              {swatches.map((color) => (
                <button key={color} type="button" aria-label={color} className="border border-[#999] p-px">
                  <span className="block w-full h-full" style={{ backgroundColor: color }} />
                </button>
              ))}
            </div>
            <div className="w-[19px] bg-[#f1f1f1] flex flex-col">
              <ScrollEdge />
              <div className="h-[21px] bg-[#cdcdcd]" />
              <div className="flex-1" />
              <ScrollEdge down />
            </div>
          </div>

          <div className="h-[5px] mt-[3px] shrink-0 border-t-2 border-[#777]" />
          <div className="h-[23px] shrink-0 flex items-center pl-[5px] bg-[#e4e4e4] border-y border-[#999] text-[12px] leading-4 text-black">선택</div>
          <NavRow id="library2" value="재질" />
          <div className="h-[34px] shrink-0 flex bg-white overflow-hidden">
            <div className="flex-1 grid grid-cols-[62px_62px_62px] auto-rows-[62px] gap-0.5 pt-[3px] pl-[3px]">
              {[0, 1, 2].map((n) => (
                <button key={n} type="button" aria-label={`폴더 ${n + 1}`} className="border border-[#999] flex justify-center pt-3">
                  <svg viewBox="0 0 36 32" className="w-9 h-8">
                    <path d="M1 4 L10 2 L12 5 L22 4 L20 32 H4 Z" fill="#8bb8d8" stroke="#3a4a55" />
                    <path d="M6 10 L35 1 L31 32 H8 Z" fill="#b3956c" stroke="#444" />
                  </svg>
                </button>
              ))}
            </div>
            <div className="w-[19px] bg-[#f1f1f1]">
              <ScrollEdge />
              <div className="h-[21px] bg-[#cdcdcd]" />
            </div>
          </div>
        </div>
        <div className="w-5 flex flex-col">
          <ScrollEdge />
          <div className="h-[21px] bg-[#cdcdcd]" />
          <div className="flex-1" />
          <ScrollEdge down />
        </div>
      </div>
    </aside>
  );
}

function StatusBar() {
  return (
    <footer className="h-[27px] shrink-0 flex items-end bg-[#f1f1f1] text-[16px] leading-5 text-black overflow-hidden">
      <div className="flex-1 h-[22px] flex items-center pl-[6px] gap-[10px]">
        <div className="flex items-center gap-[17px]">
          <svg viewBox="0 0 18 18" className="w-[18px] h-[18px]">
            <circle cx="9" cy="9" r="8" fill="none" stroke="#999" strokeWidth="1.300" />
            <path d="M9 15 L6 8 Q5 4 9 3 Q13 4 12 8 Z" fill="#999" />
          </svg>
          <svg viewBox="0 0 18 18" className="w-[18px] h-[18px]">
            <circle cx="9" cy="9" r="7.800" fill="none" stroke="#000" strokeWidth="1.800" />
            <circle cx="9" cy="5" r="1.600" />
            <path d="M7 8 H11 V11 H10 V15 H8 V11 H7 Z" />
          </svg>
          <svg viewBox="0 0 18 18" className="w-[18px] h-[18px]">
            <circle cx="9" cy="9" r="8" fill="#ddd" stroke="#999" strokeWidth="1.300" />
            <circle cx="9" cy="6.500" r="3" fill="#999" />
            <path d="M3.500 14.500 Q4 10 9 10 Q14 10 14.500 14.500 Q9 19 3.500 14.500 Z" fill="#999" />
          </svg>
        </div>
        <div className="w-px h-4 ml-[3px] bg-[#999]" />
        <p className="text-[17px]">복사된 요소를 배치하거나 값을 입력하십시오.</p>
      </div>
      <div className="w-[307px] h-6 flex items-center">
        <div className="w-px h-4 bg-[#999]" />
        <label htmlFor="measure" className="pl-[11px] pt-1 w-[51px]">거리</label>
        <input id="measure" defaultValue="404mm" className="w-[250px] h-full pt-1 pl-0.5 bg-white border border-b-0 border-[#a9b8c8]" />
      </div>
    </footer>
  );
}

function App() {
  return (
    <div className="h-screen flex flex-col bg-white pt-10 pb-11 overflow-hidden font-['Noto_Sans','Noto_Sans_CJK_KR',sans-serif]">
      <nav className="h-[25px] shrink-0 flex items-center gap-[15px] pl-[7px] pb-0.5 text-[16px] leading-5 text-black">
        {menus.map((menu) => (
          <button key={menu} type="button">{menu}</button>
        ))}
      </nav>
      <TopToolbar />

      <div className="flex-1 min-h-0 flex">
        <div className="relative flex-1 min-w-0 flex">
          <Palette />
          <main className="relative flex-1 min-w-0 bg-[#cececc] border-t-2 border-l border-[#777] overflow-hidden">
            <Scene />
            <div className="absolute left-[562px] top-[353px] h-[19px] px-0.5 bg-[#ffffe1] border border-[#666] text-[16px] leading-4 text-black">
              가장자리에
            </div>
            <div className="absolute left-[1233px] bottom-2 w-[113px] h-[46px] rounded-md bg-[#a3a3a2] shadow-[0_0_4px_3px_#c2c2c0] flex items-center justify-center pb-1 font-['DejaVu_Sans',sans-serif] font-bold text-[27px] leading-8 text-[#dededd]">
              &lt;Ctrl&gt;
            </div>
          </main>
          {/* caption strip over the canvas */}
          <div className="absolute left-0 bottom-0 w-[81%] h-[72px] pl-[92px] pb-1 flex items-center bg-black/42 text-[47px] leading-[60px] font-normal text-[#f2f2f2] whitespace-nowrap font-['Noto_Sans_CJK_KR',sans-serif]">
            이동 복사(Move Copy) - Ctrl -&gt; 이동(Move)
          </div>
        </div>
        <Tray />
      </div>
      <StatusBar />
    </div>
  );
}

export default App;
